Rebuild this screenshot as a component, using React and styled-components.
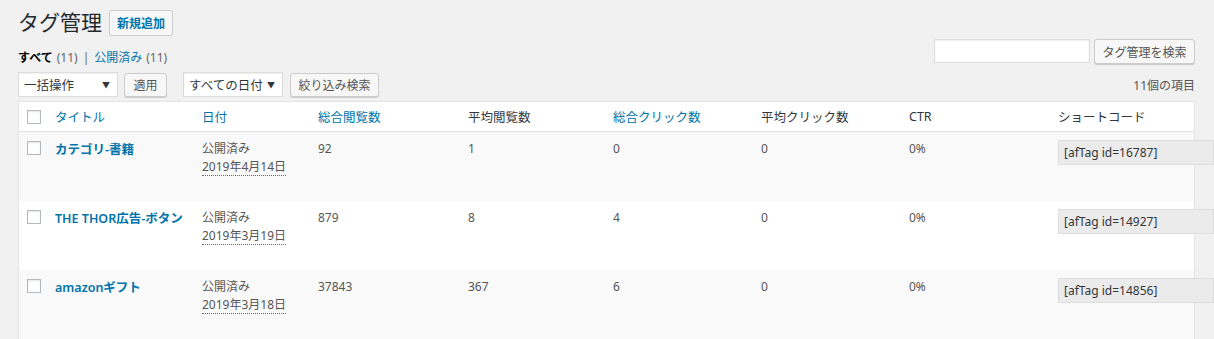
import React from "react";
import styled, { createGlobalStyle } from "styled-components";

const GlobalStyle = createGlobalStyle`
  html, body { margin: 0; padding: 0; overflow: hidden; }
  body {
    background: #f1f1f1;
    color: #444;
    font-family: "Noto Sans", "Noto Sans CJK JP", sans-serif;
    font-size: 12px;
  }
  * { box-sizing: border-box; }
`;

const Wrap = styled.div`
  padding: 9px 19px 0 18px;
`;

const Header = styled.div`
  display: flex;
  align-items: center;
  gap: 7px;
  height: 27px;
`;

const Title = styled.h1`
  margin: 0;
  font-size: 21px;
  font-weight: 400;
  line-height: 27px;
  color: #23282d;
`;

const AddButton = styled.a`
  display: inline-flex;
  align-items: center;
  height: 26px;
  padding: 0 7px;
  border: 1px solid #ccc;
  border-radius: 2px;
  background: #f7f7f7;
  color: #0073aa;
  font-size: 12px;
  font-weight: 600;
  text-decoration: none;
`;

const FilterRow = styled.div`
  display: flex;
  justify-content: space-between;
  align-items: flex-start;
  margin-top: 3px;
  height: 25px;
`;

const SubSub = styled.ul`
  list-style: none;
  margin: 10px 0 0;
  padding: 0;
  display: flex;
  line-height: 18px;
  font-size: 12px;
`;

const SubItem = styled.li`
  display: flex;
  gap: 4px;
`;

const SubLink = styled.span`
  color: ${(p) => (p.$current ? "#000" : "#0073aa")};
  font-weight: ${(p) => (p.$current ? 600 : 400)};
`;

const Count = styled.span`
  color: #666;
`;

const Sep = styled.span`
  color: #666;
  padding: 0 5px;
`;

const SearchBox = styled.div`
  display: flex;
  gap: 4px;
`;

const SearchInput = styled.div`
  width: 156px;
  height: 24px;
  background: #fff;
  border: 1px solid #ddd;
  box-shadow: inset 0 1px 2px rgba(0, 0, 0, 0.07);
`;

const Button = styled.span`
  display: inline-flex;
  align-items: center;
  justify-content: center;
  height: ${(p) => p.$h || 24}px;
  width: ${(p) => p.$w}px;
  border: 1px solid #ccc;
  border-radius: 3px;
  background: #f7f7f7;
  box-shadow: 0 1px 0 #ccc;
  color: #555;
  font-size: 12px;
  white-space: nowrap;
`;

const TableNav = styled.div`
  display: flex;
  align-items: center;
  margin-top: 8px;
  height: 25px;
`;

const Group = styled.div`
  display: flex;
  align-items: center;
  gap: ${(p) => p.$gap}px;
  margin-right: ${(p) => p.$mr || 0}px;
`;

const Select = styled.div`
  display: flex;
  align-items: center;
  justify-content: space-between;
  width: 100px;
  height: 25px;
  padding: 0 7px 0 5px;
  background: #fff;
  border: 1px solid #ddd;
  box-shadow: inset 0 1px 2px rgba(0, 0, 0, 0.07);
  color: #32373c;
  font-size: 12.5px;
  white-space: nowrap;
`;

const Arrow = styled.span`
  font-size: 8px;
  color: #32373c;
`;

const ItemCount = styled.div`
  margin-left: auto;
  color: #555;
  font-size: 12px;
`;

const Table = styled.table`
  margin-top: 4px;
  width: 100%;
  table-layout: fixed;
  border-collapse: separate;
  border-spacing: 0;
  border: 1px solid #e5e5e5;
  border-bottom: none;
  background: #fff;
  box-shadow: 0 1px 1px rgba(0, 0, 0, 0.04);
`;

const Th = styled.th`
  height: 30px;
  padding: 0 10px;
  text-align: left;
  font-weight: 400;
  font-size: 12.5px;
  color: ${(p) => (p.$link ? "#0073aa" : "#32373c")};
  border-bottom: 1px solid #e1e1e1;
  vertical-align: middle;
  white-space: nowrap;
`;

const CheckTh = styled.th`
  width: 26px;
  padding: 0 0 0 8px;
  border-bottom: 1px solid #e1e1e1;
  text-align: left;
  vertical-align: middle;
`;

const Tr = styled.tr`
  background: ${(p) => (p.$alt ? "#f9f9f9" : "#fff")};
`;

const Td = styled.td`
  height: 69px;
  padding: 8px 10px;
  vertical-align: top;
  line-height: 18px;
  color: #555;
  font-size: 12px;
  white-space: nowrap;
`;

const CheckTd = styled.td`
  padding: 9px 0 0 8px;
  vertical-align: top;
`;

const Checkbox = styled.span`
  display: block;
  width: 14px;
  height: 14px;
  border: 1px solid #b4b9be;
  background: #fff;
  box-shadow: inset 0 1px 2px rgba(0, 0, 0, 0.1);
`;

const RowTitle = styled.a`
  display: inline-block;
  padding-top: 1px;
  color: #0073aa;
  font-weight: 600;
  font-size: 12.5px;
  text-decoration: none;
`;

const DateAbbr = styled.abbr`
  text-decoration: none;
  border-bottom: 1px dotted #666;
`;

const Shortcode = styled.div`
  width: 156px;
  height: 25px;
  padding: 0 5px;
  display: flex;
  align-items: center;
  background: #ebebeb;
  border: 1px solid #ddd;
  color: #32373c;
  font-size: 12px;
`;

const cols = [
  { label: "タイトル", link: true, w: 147 },
  { label: "日付", link: true, w: 116 },
  { label: "総合閲覧数", link: true, w: 150 },
  { label: "平均閲覧数", w: 145 },
  { label: "総合クリック数", link: true, w: 148 },
  { label: "平均クリック数", w: 148 },
  { label: "CTR", w: 149 },
  { label: "ショートコード", w: 146 },
];

const rows = [
  { title: "カテゴリ-書籍", date: "2019年4月14日", views: "92", avg: "1", clicks: "0", avgc: "0", ctr: "0%", id: "16787" },
  { title: "THE THOR広告-ボタン", date: "2019年3月19日", views: "879", avg: "8", clicks: "4", avgc: "0", ctr: "0%", id: "14927" },
  { title: "amazonギフト", date: "2019年3月18日", views: "37843", avg: "367", clicks: "6", avgc: "0", ctr: "0%", id: "14856" },
];

export default function App() {
  return (
    <>
      <GlobalStyle />
      <Wrap>
        <Header>
          <Title>タグ管理</Title>
          <AddButton>新規追加</AddButton>
        </Header>
        <FilterRow>
          <SubSub>
            <SubItem>
              <SubLink $current>すべて</SubLink>
              <Count>(11)</Count>
            </SubItem>
            <Sep>|</Sep>
            <SubItem>
              <SubLink>公開済み</SubLink>
              <Count>(11)</Count>
            </SubItem>
          </SubSub>
          <SearchBox>
            <SearchInput />
            <Button $w={101} $h={25}>タグ管理を検索</Button>
          </SearchBox>
        </FilterRow>
        <TableNav>
          <Group $gap={6} $mr={16}>
            <Select>
              一括操作
              <Arrow>▼</Arrow>
            </Select>
            <Button $w={43}>適用</Button>
          </Group>
          <Group $gap={7}>
            <Select>
              すべての日付
              <Arrow>▼</Arrow>
            </Select>
            <Button $w={89}>絞り込み検索</Button>
          </Group>
          <ItemCount>11個の項目</ItemCount>
        </TableNav>
        <Table>
          <colgroup>
            <col style={{ width: 26 }} />
            {cols.map((c) => (
              <col key={c.label} style={{ width: c.w }} />
            ))}
          </colgroup>
          <thead>
            <tr>
              <CheckTh>
                <Checkbox />
              </CheckTh>
              {cols.map((c) => (
                <Th key={c.label} $link={c.link}>
                  {c.label}
                </Th>
              ))}
            </tr>
          </thead>
          <tbody>
            {rows.map((r, i) => (
              <Tr key={r.id} $alt={i % 2 === 0}>
                <CheckTd>
                  <Checkbox />
                </CheckTd>
                <Td>
                  <RowTitle>{r.title}</RowTitle>
                </Td>
                <Td>
                  公開済み
                  <br />
                  <DateAbbr>{r.date}</DateAbbr>
                </Td>
                <Td>{r.views}</Td>
                <Td>{r.avg}</Td>
                <Td>{r.clicks}</Td>
                <Td>{r.avgc}</Td>
                <Td>{r.ctr}</Td>
                <Td>
                  <Shortcode>[afTag id={r.id}]</Shortcode>
                </Td>
              </Tr>
            ))}
          </tbody>
        </Table>
      </Wrap>
    </>
  );
}
